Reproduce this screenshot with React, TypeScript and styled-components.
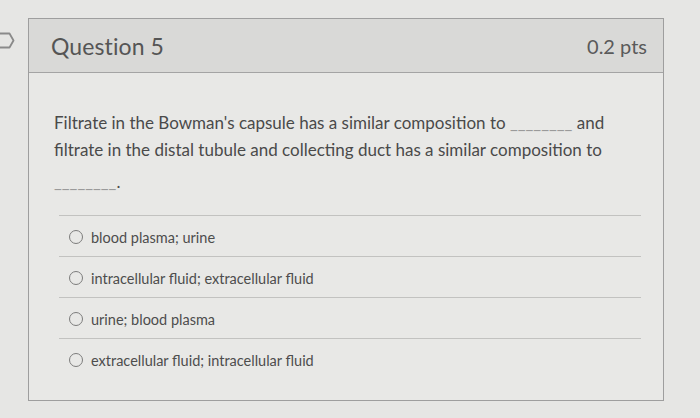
import React from "react";
import styled, { createGlobalStyle } from "styled-components";

const Global = createGlobalStyle`
  html, body {
    margin: 0;
    padding: 0;
    background: #e6e6e4;
    font-family: Lato, "Open Sans", "Liberation Sans", sans-serif;
    color: #4b4b4b;
  }
  #root { width: 700px; height: 418px; overflow: hidden; }
`;

const Page = styled.div`
  display: flex;
  align-items: flex-start;
  padding-top: 18px;
  height: 418px;
  box-sizing: border-box;
`;

const FlagColumn = styled.div`
  width: 31px;
  flex: 0 0 31px;
  padding-top: 14px;
  margin-left: -3px;
`;

const Card = styled.div`
  width: 636px;
  box-sizing: border-box;
  border: 1px solid #9e9e9e;
  background: #e8e8e6;
  padding-bottom: 21px;
`;

const Header = styled.div`
  height: 53px;
  display: flex;
  align-items: center;
  justify-content: space-between;
  padding: 0 16px 0 22px;
  background: #d9d9d7;
  border-bottom: 1px solid #a4a4a4;
`;

const Title = styled.div`
  font-size: 23px;
  color: #555555;
  letter-spacing: 0.1px;
`;

const Points = styled.div`
  font-size: 20px;
  color: #5a5a5a;
`;

const Body = styled.div`
  padding: 36px 22px 0 25px;
`;

const Text = styled.p<{ $gap?: number }>`
  margin: 0 0 ${(p) => p.$gap ?? 0}px 0;
  font-size: 17px;
  line-height: 27px;
  color: #4a4a4a;
`;

const Blank = styled.span`
  color: #9a9a9a;
`;

const Answers = styled.div`
  margin: 20px 0 0 5px;
`;

const Answer = styled.label`
  height: 41px;
  box-sizing: border-box;
  display: flex;
  align-items: center;
  gap: 8px;
  padding: 2px 0 0 10px;
  border-top: 1px solid #c2c2c0;
  font-size: 14.5px;
  color: #4d4d4d;
`;

const Radio = styled.span`
  width: 12px;
  height: 12px;
  border-radius: 50%;
  border: 1.7px solid #7c7c7c;
  flex: 0 0 auto;
`;

const FlagIcon = () => (
  <svg width="18" height="17" viewBox="0 0 18 17">
    <path
      d="M1 1.5 H12.5 L16.5 8.5 L12.5 15.5 H1"
      fill="none"
      stroke="#8a8a8a"
      strokeWidth="1.8"
      strokeLinejoin="round"
    />
  </svg>
);

const answers = [
  "blood plasma; urine",
  "intracellular fluid; extracellular fluid",
  "urine; blood plasma",
  "extracellular fluid; intracellular fluid",
];

export default function App() {
  return (
    <>
      <Global />
      <Page>
        <FlagColumn>
          <FlagIcon />
        </FlagColumn>
        <Card>
          <Header>
            <Title>Question 5</Title>
            <Points>0.2 pts</Points>
          </Header>
          <Body>
            <Text $gap={5}>
              Filtrate in the Bowman's capsule has a similar composition to{" "}
              <Blank>________</Blank> and
              <br />
              filtrate in the distal tubule and collecting duct has a similar
              composition to
            </Text>
            <Text>
              <Blank>________</Blank>.
            </Text>
            <Answers>
              {answers.map((a) => (
                <Answer key={a}>
                  <Radio />
                  {a}
                </Answer>
              ))}
            </Answers>
          </Body>
        </Card>
      </Page>
    </>
  );
}
